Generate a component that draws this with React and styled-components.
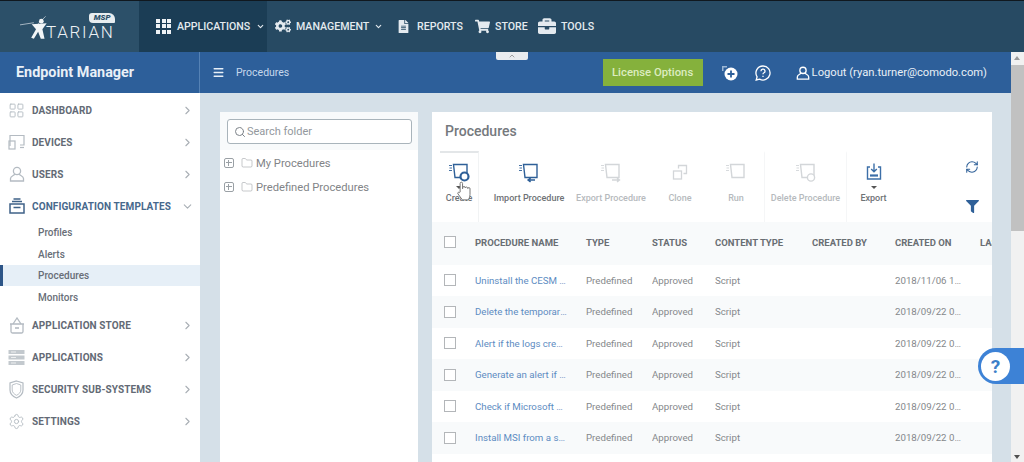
import styled, { createGlobalStyle } from "styled-components";
import {
  ChevronRight,
  ChevronDown,
  ChevronUp,
  Search,
  Menu,
  LayoutGrid,
  Settings,
  Folder,
  RefreshCw,
} from "lucide-react";
import { FaCogs, FaFileAlt, FaShoppingCart, FaBriefcase, FaFilter } from "react-icons/fa";

const GlobalStyle = createGlobalStyle`
  html, body {
    margin: 0;
    height: 100%;
    overflow: hidden;
    background: #d5e0e8;
    font-family: Roboto, "Liberation Sans", sans-serif;
  }
  * { box-sizing: border-box; }
`;

const Page = styled.div`
  position: relative;
  display: flex;
  flex-direction: column;
  width: 1024px;
  height: 462px;
  overflow: hidden;
`;

/* top nav */
const TopBar = styled.header`
  display: flex;
  flex: none;
  height: 52px;
  border-top: 1px solid #10181f;
  background: #274a63;
`;

const LogoArea = styled.div`
  display: flex;
  width: 139px;
  padding: 11px 0 0 20px;
  background: #2c5069;
`;

const Logo = styled.div`
  position: relative;
  display: flex;
  align-items: center;
  height: 30px;
  color: #eef2f5;
`;

const LogoWord = styled.span`
  margin-left: -6px;
  padding-top: 9px;
  font-size: 17px;
  font-weight: 300;
  letter-spacing: 1.7px;
`;

const MspBadge = styled.span`
  position: absolute;
  top: 1px;
  right: 0;
  padding: 0 4px 0 5px;
  border-radius: 3px 6px 1px 4px;
  background: #e8edf0;
  color: #2c5069;
  font-size: 8px;
  font-style: italic;
  font-weight: 900;
  line-height: 10px;
`;

const NavItem = styled.a`
  display: flex;
  align-items: center;
  gap: ${(p) => p.$gap || 6}px;
  width: ${(p) => p.$w}px;
  padding: 0 0 1px ${(p) => p.$pad}px;
  background: ${(p) => (p.$active ? "#1b3d55" : "transparent")};
  color: #e4eaef;
  font-size: 10.6px;
  font-weight: 500;
  svg { flex: none; }
`;

const DotsGrid = styled.div`
  display: grid;
  grid-template-columns: repeat(3, 4px);
  grid-auto-rows: 4px;
  gap: 1.5px;
  i { background: #eef2f5; }
`;

/* blue bar */
const Workspace = styled.div`
  display: flex;
  flex: 1;
  min-height: 0;
`;

const Content = styled.div`
  display: flex;
  flex: 1;
  flex-direction: column;
  min-width: 0;
`;

const SubBar = styled.div`
  display: flex;
  flex: none;
  align-items: center;
  height: 41px;
  background: #2d5f9a;
  color: #e8f0f8;
`;

const Brand = styled.div`
  display: flex;
  align-items: center;
  align-self: stretch;
  width: 200px;
  padding-left: 16px;
  border-right: 1px solid #5582b5;
  color: #e9f0f7;
  font-size: 14.4px;
  font-weight: 700;
`;

const Crumb = styled.div`
  display: flex;
  flex: 1;
  align-items: center;
  gap: 11px;
  padding-left: 12px;
  color: #c6d8ec;
  font-size: 10.5px;
`;

const LicenseButton = styled.button`
  flex: none;
  width: 100px;
  height: 27px;
  border: 0;
  background: #85b13c;
  color: #dcecc0;
  font-family: inherit;
  font-size: 11.3px;
  font-weight: 500;
`;

const BarIcon = styled.span`
  display: flex;
  flex: none;
  margin-left: ${(p) => p.$ml}px;
`;

const Logout = styled.div`
  display: flex;
  flex: none;
  align-items: center;
  gap: 2px;
  margin: 0 24px 0 25px;
  color: #e9f0f7;
  font-size: 11.2px;
  white-space: nowrap;
`;

const Body = styled.div`
  display: flex;
  flex: 1;
  min-height: 0;
`;

/* sidebar */
const Sidebar = styled.nav`
  flex: none;
  width: 200px;
  padding-top: 1px;
  background: #fff;
`;

const SideRow = styled.div`
  display: flex;
  align-items: center;
  height: 32px;
  padding: 0 6px 0 8px;
  color: ${(p) => (p.$open ? "#47688c" : "#636a75")};
  font-size: 10px;
  font-weight: 700;
  letter-spacing: 0.1px;
  svg { flex: none; }
`;

const SideIcon = styled.span`
  display: flex;
  justify-content: center;
  width: 17px;
  margin-right: 7px;
  color: ${(p) => (p.$open ? "#3f6288" : "#b4bbc2")};
`;

const SideLabel = styled.span`
  flex: 1;
`;

const SubList = styled.div`
  margin: -1px 0 1px;
`;

const SubRow = styled.div`
  display: flex;
  align-items: center;
  height: ${(p) => (p.$active ? 21 : 22)}px;
  padding-left: ${(p) => (p.$active ? 35 : 38)}px;
  border-left: ${(p) => (p.$active ? "3px solid #2d5587" : "0")};
  background: ${(p) => (p.$active ? "#e6eff7" : "transparent")};
  color: #686e77;
  font-size: 10px;
  font-weight: 500;
`;

/* main area */
const Main = styled.main`
  display: flex;
  flex: 1;
  gap: 14px;
  min-width: 0;
  padding: 19px 19px 0 20px;
  background: #d5e0e8;
`;

const TreePanel = styled.section`
  flex: none;
  width: 198px;
  background: #fff;
`;

const SearchWrap = styled.div`
  height: 38px;
  padding: 7px 6px 0 7px;
  background: #f8fafb;
`;

const SearchBox = styled.div`
  display: flex;
  align-items: center;
  gap: 1px;
  height: 25px;
  padding-left: 6px;
  border: 1px solid #a9b4bb;
  border-radius: 3px;
  background: #fff;
  color: #93989d;
  font-size: 11px;
`;

const TreeList = styled.ul`
  margin: 0;
  padding: 1px 0 0 4px;
  list-style: none;
`;

const TreeRow = styled.li`
  display: flex;
  align-items: center;
  height: 24px;
  color: #828487;
  font-size: 11.2px;
`;

const Expander = styled.span`
  position: relative;
  width: 10px;
  height: 10px;
  margin-right: 7px;
  border: 1px solid #9aa0a5;
  border-radius: 2px;
  &::before {
    content: "";
    position: absolute;
    left: 1px;
    right: 1px;
    top: 3px;
    height: 1px;
    background: #9aa0a5;
  }
  &::after {
    content: "";
    position: absolute;
    top: 1px;
    bottom: 1px;
    left: 3px;
    width: 1px;
    background: #9aa0a5;
  }
`;

const ProcPanel = styled.section`
  display: flex;
  flex: 1;
  flex-direction: column;
  min-width: 0;
  overflow: hidden;
  background: #fff;
`;

const PanelTitle = styled.h2`
  flex: none;
  height: 39px;
  margin: 0;
  padding: 10px 0 0 13px;
  color: #75797d;
  font-size: 14px;
  font-weight: 500;
  line-height: 18px;
`;

const Toolbar = styled.div`
  display: flex;
  flex: none;
  height: 71px;
  padding-left: 8px;
`;

const ToolItem = styled.div`
  display: flex;
  flex: none;
  flex-direction: column;
  align-items: center;
  width: ${(p) => p.$w}px;
  margin-left: ${(p) => p.$ml || 0}px;
  padding-top: 10px;
  border-top: ${(p) => (p.$active ? "2px solid #e3e6e8" : "2px solid transparent")};
  border-left: ${(p) => (p.$sep ? "1px solid #f5f6f7" : "0")};
  border-right: ${(p) => (p.$active ? "1px solid #f1f3f4" : "0")};
  color: ${(p) => (p.$off ? "#b6babd" : "#6e7276")};
  font-size: 9px;
  font-weight: 500;
  white-space: nowrap;
`;

const ToolGlyph = styled.span`
  display: flex;
  height: 20px;
`;

const Caret = styled.span`
  width: 0;
  height: 0;
  margin-top: 3px;
  border: 3px solid transparent;
  border-top: 3px solid ${(p) => p.$color};
  border-bottom: 0;
`;

const ToolLabel = styled.span`
  margin-top: ${(p) => (p.$caret ? 3 : 9)}px;
  line-height: 12px;
`;

const ToolSide = styled.div`
  display: flex;
  flex: 1;
  flex-direction: column;
  align-items: flex-end;
  gap: 26px;
  padding: 9px 13px 0 0;
  color: #2f6098;
`;

const Row = styled.div`
  display: grid;
  flex: none;
  grid-template-columns: 31px 111px 66px 63px 97px 83px 85px 60px;
  align-items: center;
  width: 608px;
  height: ${(p) => p.$h || 31.5}px;
  padding: 0 0 ${(p) => p.$pb || 0}px 12px;
  background: ${(p) => (p.$shade ? "#f8fafb" : "#fff")};
  color: #85888b;
  font-size: 9.7px;
`;

const HeadCell = styled.span`
  color: #696e73;
  font-size: 9.5px;
  font-weight: 700;
  white-space: nowrap;
`;

const Check = styled.span`
  width: 12px;
  height: 12px;
  border: 1px solid #b3b6b9;
  background: #fff;
`;

const NameLink = styled.a`
  overflow: hidden;
  padding-right: 19px;
  color: #5d8cc2;
  text-overflow: ellipsis;
  white-space: nowrap;
`;

const Cell = styled.span`
  overflow: hidden;
  padding-right: ${(p) => p.$pr || 0}px;
  text-overflow: ellipsis;
  white-space: nowrap;
`;

/* scrollbar */
const ScrollTrack = styled.div`
  display: flex;
  flex: none;
  flex-direction: column;
  align-items: center;
  justify-content: space-between;
  width: 13px;
  background: #f1f1f1;
`;

const ScrollThumb = styled.div`
  flex: none;
  width: 100%;
  height: 166px;
  margin-top: 13px;
  background: #c1c1c1;
`;

const ScrollArrow = styled.span`
  position: absolute;
  right: 4px;
  width: 0;
  height: 0;
  border: 3px solid transparent;
  ${(p) =>
    p.$up
      ? "top: 56px; border-top: 0; border-bottom: 4px solid #9a9a9a;"
      : "bottom: 3px; border-bottom: 0; border-top: 4px solid #505050;"}
`;

/* overlays */
const CollapseTab = styled.div`
  position: absolute;
  top: 52px;
  left: 496px;
  display: flex;
  justify-content: center;
  width: 32px;
  height: 8px;
  border-radius: 0 0 2px 2px;
  background: #e9ecef;
  color: #777;
`;

const HelpTab = styled.div`
  position: absolute;
  top: 348px;
  right: 0;
  display: flex;
  align-items: center;
  width: 46px;
  height: 36px;
  padding-left: 3px;
  border-radius: 18px 0 0 18px;
  background: #3d82d6;
`;

const HelpCircle = styled.div`
  display: flex;
  align-items: center;
  justify-content: center;
  width: 29px;
  height: 29px;
  border-radius: 50%;
  background: #fff;
  color: #3d7fc9;
  font-size: 19px;
  font-weight: 700;
`;

const HandCursor = styled.svg`
  position: absolute;
  top: 181px;
  left: 456px;
`;

/* drawn icons */
const Figure = () => (
  <svg width="32" height="26" viewBox="0 0 30 24" fill="none">
    <path d="M0 10 L13 8" stroke="#b9c6d0" strokeWidth="0.8" />
    <path d="M24 2 L17 9" stroke="#b9c6d0" strokeWidth="0.8" />
    <circle cx="20" cy="6.5" r="2.2" fill="#f2f5f7" />
    <path d="M11 9.5 L25 8.5 L21 14 L23 23 L19.5 23 L17 16.5 L13 23 L10.5 22 L15 14 Z" fill="#f2f5f7" />
  </svg>
);

const ProcGlyph = ({ color, children }) => (
  <svg width="22" height="20" viewBox="0 0 22 20" fill="none" stroke={color} strokeWidth="1.4">
    <path d="M1 2.5h3M1.500 5h2.500M1 7.500h3" strokeWidth="0.9" />
    <path d="M5.500 1.500H19v13H7z" />
    {children}
  </svg>
);

const CloneGlyph = () => (
  <svg width="20" height="20" viewBox="0 0 20 20" fill="none" stroke="#d3d6d9" strokeWidth="1.3">
    <rect x="3.5" y="8" width="8" height="8" />
    <path d="M8.5 5.5V2.5h8v8h-3" />
  </svg>
);

const ExportGlyph = () => (
  <svg width="18" height="20" viewBox="0 0 18 20" fill="none" stroke="#3c6fa8" strokeWidth="1.4">
    <path d="M5 4H2.5v12h13V4H13" />
    <path d="M9 0.5v8M6.2 6L9 8.8 11.8 6" />
    <path d="M5 12.5h8" strokeWidth="2.2" />
  </svg>
);

const DevicesGlyph = () => (
  <svg width="17" height="16" viewBox="0 0 17 16" fill="none" stroke="#b4bbc2" strokeWidth="1.2">
    <path d="M2 12V1.5h14V11h-4" />
    <rect x="1" y="7" width="6" height="8" />
    <path d="M12 13.5h4" />
  </svg>
);

const TemplatesGlyph = () => (
  <svg width="16" height="16" viewBox="0 0 16 16" fill="none" stroke="#3f6288" strokeWidth="1.5">
    <rect x="1" y="6" width="14" height="9" />
    <path d="M3 3.5h10M4.5 1h7M4.5 9.5h7" />
  </svg>
);

const ServerGlyph = () => (
  <svg width="17" height="15" viewBox="0 0 17 15" fill="#c3c9ce">
    <rect x="0.5" y="0" width="16" height="4" />
    <rect x="0.5" y="5.5" width="16" height="4" />
    <rect x="0.5" y="11" width="16" height="4" />
    <path d="M3 2h5M3 7.5h5M3 13h5" stroke="#fff" strokeWidth="0.7" />
  </svg>
);

const PersonGlyph = ({ size, color, width }) => (
  <svg width={size} height={size} viewBox="0 0 16 16" fill="none" stroke={color} strokeWidth={width}>
    <circle cx="8" cy="5" r="3.6" />
    <path d="M5.8 8.2C5 9.5 1.5 10 1.5 12.5V15h13v-2.5c0-2.5-3.5-3-4.3-4.3" />
  </svg>
);

const BasketGlyph = () => (
  <svg width="16" height="17" viewBox="0 0 16 17" fill="none" stroke="#b4bbc2" strokeWidth="1.3">
    <path d="M4 7l4-6 4 6" />
    <path d="M1 7h14M2 7v7.5a1.5 1.5 0 0 0 1.5 1.5h9a1.5 1.5 0 0 0 1.5-1.5V7" />
    <path d="M6 11h4" strokeWidth="1.6" />
  </svg>
);

const ShieldGlyph = () => (
  <svg width="15" height="19" viewBox="0 0 15 19" fill="none" stroke="#b4bbc2">
    <path d="M7.5 1L14 3v7c0 4-3 6.5-6.5 8C4 16.5 1 14 1 10V3z" strokeWidth="1.2" />
    <path d="M7.5 3.5L11.8 5v5c0 2.5-2 4.2-4.3 5.3C5.2 14.2 3.2 12.5 3.2 10V5z" strokeWidth="0.9" />
  </svg>
);

const AddGlyph = () => (
  <svg width="18" height="18" viewBox="0 0 18 18">
    <path d="M1 2h5v1.5H2.5V7H1z" fill="#9bb6d4" />
    <circle cx="10" cy="10" r="6.5" fill="#fff" />
    <path d="M10 6.5v7M6.5 10h7" stroke="#2d5f9a" strokeWidth="1.8" />
  </svg>
);

const ChatHelpGlyph = () => (
  <svg width="16" height="16" viewBox="0 0 16 16" fill="none" stroke="#fff" strokeWidth="1.3">
    <path d="M8 1a7 7 0 1 1-3.4 13.1L1.2 15l.9-3.2A7 7 0 0 1 8 1z" />
    <path d="M6 6.2A2 2 0 1 1 8.6 8c-.5.3-.6.6-.6 1.2" />
    <path d="M8 10.8V12" />
  </svg>
);

const sideTop = [
  { label: "DASHBOARD", icon: <LayoutGrid size={17} strokeWidth={1.3} /> },
  { label: "DEVICES", icon: <DevicesGlyph /> },
  { label: "USERS", icon: <PersonGlyph size={16} color="#b4bbc2" width={1.3} /> },
];

const sideBottom = [
  { label: "APPLICATION STORE", icon: <BasketGlyph /> },
  { label: "APPLICATIONS", icon: <ServerGlyph /> },
  { label: "SECURITY SUB-SYSTEMS", icon: <ShieldGlyph /> },
  { label: "SETTINGS", icon: <Settings size={17} strokeWidth={1.3} /> },
];

const rows = [
  { name: "Uninstall the CESM agent", date: "2018/11/06 16:20:11" },
  { name: "Delete the temporary files", date: "2018/09/22 04:10:32" },
  { name: "Alert if the logs created", date: "2018/09/22 04:10:32" },
  { name: "Generate an alert if disk", date: "2018/09/22 04:10:32" },
  { name: "Check if Microsoft Office", date: "2018/09/22 04:10:32" },
  { name: "Install MSI from a share", date: "2018/09/22 04:10:32" },
  { name: "List all services", date: "2018/09/22 04:10:32" },
];

function SideItem({ item }) {
  return (
    <SideRow>
      <SideIcon>{item.icon}</SideIcon>
      <SideLabel>{item.label}</SideLabel>
      <ChevronRight size={13} color="#a9afb5" />
    </SideRow>
  );
}

export default function App() {
  return (
    <Page>
      <GlobalStyle />
      <TopBar>
        <LogoArea>
          <Logo>
            <Figure />
            <LogoWord>TARIAN</LogoWord>
            <MspBadge>MSP</MspBadge>
          </Logo>
        </LogoArea>
        <NavItem $w={128} $pad={17} $active>
          <DotsGrid>
            {Array.from({ length: 9 }).map((_, i) => (
              <i key={i} />
            ))}
          </DotsGrid>
          APPLICATIONS
          <ChevronDown size={9} strokeWidth={3} />
        </NavItem>
        <NavItem $w={130} $pad={8} $gap={5}>
          <FaCogs size={16} />
          MANAGEMENT
          <ChevronDown size={9} strokeWidth={3} />
        </NavItem>
        <NavItem $w={78} $pad={0} $gap={7}>
          <FaFileAlt size={13} />
          REPORTS
        </NavItem>
        <NavItem $w={63} $pad={0} $gap={5}>
          <FaShoppingCart size={15} />
          STORE
        </NavItem>
        <NavItem $w={80} $pad={0} $gap={5}>
          <FaBriefcase size={18} />
          TOOLS
        </NavItem>
      </TopBar>

      <Workspace>
        <Content>
          <SubBar>
            <Brand>Endpoint Manager</Brand>
            <Crumb>
              <Menu size={13} strokeWidth={2.5} color="#e8f0f8" />
              Procedures
            </Crumb>
            <LicenseButton>License Options</LicenseButton>
            <BarIcon $ml={18}>
              <AddGlyph />
            </BarIcon>
            <BarIcon $ml={16}>
              <ChatHelpGlyph />
            </BarIcon>
            <Logout>
              <PersonGlyph size={14} color="#fff" width={1.5} />
              Logout (ryan.turner@comodo.com)
            </Logout>
          </SubBar>

          <Body>
            <Sidebar>
              {sideTop.map((item) => (
                <SideItem key={item.label} item={item} />
              ))}
              <SideRow $open>
                <SideIcon $open>
                  <TemplatesGlyph />
                </SideIcon>
                <SideLabel>CONFIGURATION TEMPLATES</SideLabel>
                <ChevronDown size={13} color="#a9afb5" />
              </SideRow>
              <SubList>
                <SubRow>Profiles</SubRow>
                <SubRow>Alerts</SubRow>
                <SubRow $active>Procedures</SubRow>
                <SubRow>Monitors</SubRow>
              </SubList>
              {sideBottom.map((item) => (
                <SideItem key={item.label} item={item} />
              ))}
            </Sidebar>

            <Main>
              <TreePanel>
                <SearchWrap>
                  <SearchBox>
                    <Search size={12} strokeWidth={2} color="#7d8389" />
                    Search folder
                  </SearchBox>
                </SearchWrap>
                <TreeList>
                  {["My Procedures", "Predefined Procedures"].map((t) => (
                    <TreeRow key={t}>
                      <Expander />
                      <Folder size={12} strokeWidth={1} color="#8c9196" style={{ marginRight: 3 }} />
                      {t}
                    </TreeRow>
                  ))}
                </TreeList>
              </TreePanel>

              <ProcPanel>
                <PanelTitle>Procedures</PanelTitle>
                <Toolbar>
                  <ToolItem $w={39} $active>
                    <ToolGlyph>
                      <ProcGlyph color="#2f6098">
                        <circle cx="16.5" cy="13.5" r="4" fill="#fff" strokeWidth="2.2" />
                      </ProcGlyph>
                    </ToolGlyph>
                    <Caret $color="#555" />
                    <ToolLabel $caret>Create</ToolLabel>
                  </ToolItem>
                  <ToolItem $w={82} $ml={9}>
                    <ToolGlyph>
                      <ProcGlyph color="#2f6098">
                        <path d="M10 17h7M12.5 15l-2.5 2 2.5 2" fill="#2f6098" />
                      </ProcGlyph>
                    </ToolGlyph>
                    <ToolLabel>Import Procedure</ToolLabel>
                  </ToolItem>
                  <ToolItem $w={82} $off>
                    <ToolGlyph>
                      <ProcGlyph color="#d3d6d9">
                        <path d="M12 17h7M17 15l2.5 2-2.5 2" fill="#d3d6d9" />
                      </ProcGlyph>
                    </ToolGlyph>
                    <ToolLabel>Export Procedure</ToolLabel>
                  </ToolItem>
                  <ToolItem $w={56} $off>
                    <ToolGlyph>
                      <CloneGlyph />
                    </ToolGlyph>
                    <ToolLabel>Clone</ToolLabel>
                  </ToolItem>
                  <ToolItem $w={56} $off>
                    <ToolGlyph>
                      <ProcGlyph color="#d3d6d9" />
                    </ToolGlyph>
                    <ToolLabel>Run</ToolLabel>
                  </ToolItem>
                  <ToolItem $w={82} $off $sep>
                    <ToolGlyph>
                      <ProcGlyph color="#d3d6d9">
                        <circle cx="16" cy="14.5" r="3.6" fill="#fff" />
                      </ProcGlyph>
                    </ToolGlyph>
                    <ToolLabel>Delete Procedure</ToolLabel>
                  </ToolItem>
                  <ToolItem $w={54} $sep>
                    <ToolGlyph>
                      <ExportGlyph />
                    </ToolGlyph>
                    <Caret $color="#555" />
                    <ToolLabel $caret>Export</ToolLabel>
                  </ToolItem>
                  <ToolSide>
                    <RefreshCw size={14} strokeWidth={1.8} />
                    <FaFilter size={13} />
                  </ToolSide>
                </Toolbar>

                <Row $h={42.5} $pb={2} $shade>
                  <Check />
                  <HeadCell>PROCEDURE NAME</HeadCell>
                  <HeadCell>TYPE</HeadCell>
                  <HeadCell>STATUS</HeadCell>
                  <HeadCell>CONTENT TYPE</HeadCell>
                  <HeadCell>CREATED BY</HeadCell>
                  <HeadCell>CREATED ON</HeadCell>
                  <HeadCell>LAST MODIFIED</HeadCell>
                </Row>
                {rows.map((r, i) => (
                  <Row key={r.name} $shade={i % 2 === 1}>
                    <Check />
                    <NameLink>{r.name}</NameLink>
                    <Cell>Predefined</Cell>
                    <Cell>Approved</Cell>
                    <Cell>Script</Cell>
                    <Cell />
                    <Cell $pr={16}>{r.date}</Cell>
                    <Cell />
                  </Row>
                ))}
              </ProcPanel>
            </Main>
          </Body>
        </Content>
        <ScrollTrack>
          <ScrollThumb />
        </ScrollTrack>
      </Workspace>

      <ScrollArrow $up />
      <ScrollArrow />
      <CollapseTab>
        <ChevronUp size={8} strokeWidth={2} />
      </CollapseTab>
      <HandCursor width="16" height="20" viewBox="0 0 14 18" fill="#fff" stroke="#777" strokeWidth="0.9">
        <path d="M3.5 10V2.2a1.1 1.1 0 0 1 2.2 0V7l.3-1.2a1 1 0 0 1 2 .2l.2.3a1 1 0 0 1 2 .2l.2.3a1 1 0 0 1 2 .3V12c0 2.5-1.2 4.5-1.5 5H5.5L1.5 11.5c-.6-1 .8-2 1.6-1.1z" />
      </HandCursor>
      <HelpTab>
        <HelpCircle>?</HelpCircle>
      </HelpTab>
    </Page>
  );
}
